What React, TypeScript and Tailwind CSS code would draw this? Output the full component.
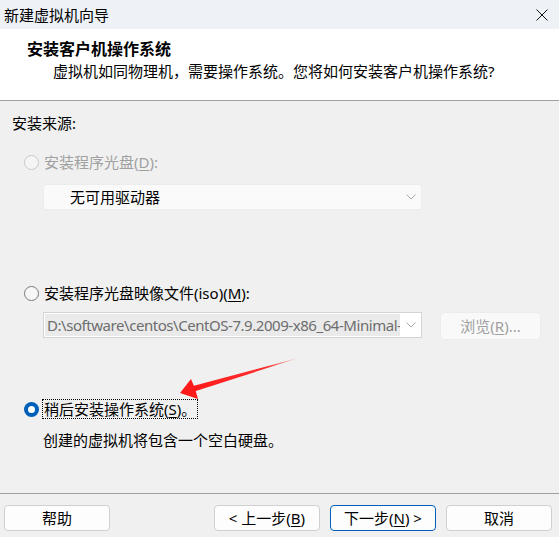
import React from 'react';

const font = '"Segoe UI", "Noto Sans", "Noto Sans CJK SC", sans-serif';

function Radio({ checked, disabled }: { checked?: boolean; disabled?: boolean }) {
  if (checked) {
    return (
      <span className="w-[15px] h-[15px] rounded-full bg-[#005fb8] flex items-center justify-center shrink-0">
        <span className="w-[7px] h-[7px] rounded-full bg-white" />
      </span>
    );
  }
  return (
    <span
      className={`w-[15px] h-[15px] rounded-full border shrink-0 ${
        disabled ? 'border-[#c8c8c8] bg-[#f5f5f5]' : 'border-[#7a7a7a] bg-[#f7f7f7]'
      }`}
    />
  );
}

function Chevron() {
  return (
    <svg width="10" height="6" viewBox="0 0 10 6" className="shrink-0">
      <path d="M0.5 0.5 L5 5 L9.5 0.5" fill="none" stroke="#a8a8a8" strokeWidth="1" />
    </svg>
  );
}

function Button({ label, primary }: { label: React.ReactNode; primary?: boolean }) {
  return (
    <button
      className={`w-[106px] h-[26px] rounded-[4px] bg-[#fdfdfd] text-[15px] text-black flex items-center justify-center border ${
        primary ? 'border-[#005fb8]' : 'border-[#d0d0d0]'
      }`}
    >
      {label}
    </button>
  );
}

export default function App() {
  return (
    <div className="w-[559px] h-[537px] flex flex-col bg-[#f0f0f0] relative overflow-hidden" style={{ fontFamily: font }}>
      {/* Title bar */}
      <div className="h-[29px] bg-[#eef2f7] flex items-center justify-between pl-[4px] pr-[11px] shrink-0">
        <span className="text-[15px] text-black leading-[20px]">新建虚拟机向导</span>
        <svg width="12" height="12" viewBox="0 0 12 12">
          <path d="M0.5 0.5 L11.5 11.5 M11.5 0.5 L0.5 11.5" stroke="#111" strokeWidth="1" />
        </svg>
      </div>

      {/* Header */}
      <div className="h-[72px] bg-white border-b border-[#a0a0a0] shrink-0 pl-[27px] pt-[9px]">
        <div className="text-[16px] font-bold text-black leading-[22px]">安装客户机操作系统</div>
        <div className="text-[15px] text-black leading-[20px] pl-[26px] mt-[1px]">
          虚拟机如同物理机，需要操作系统。您将如何安装客户机操作系统?
        </div>
      </div>

      {/* Body */}
      <div className="flex-1 flex flex-col pt-[12px]">
        <div className="pl-[12px] text-[15px] leading-[20px] text-black">安装来源:</div>

        <div className="flex items-center gap-[5px] pl-[24px] mt-[19px] h-[20px]">
          <Radio disabled />
          <span className="text-[15px] leading-[20px] text-[#a0a0a0]">
            安装程序光盘(<span className="underline underline-offset-2">D</span>):
          </span>
        </div>

        <div className="ml-[43px] mt-[12px] w-[379px] h-[26px] bg-[#fafafa] border border-[#ececec] rounded-[3px] flex items-center justify-between pl-[26px] pr-[5px]">
          <span className="text-[15px] leading-[20px] text-black">无可用驱动器</span>
          <Chevron />
        </div>

        <div className="flex items-center gap-[5px] pl-[24px] mt-[73px] h-[20px]">
          <Radio />
          <span className="text-[15px] leading-[20px] text-black">
            安装程序光盘映像文件(iso)(<span className="underline underline-offset-2">M</span>):
          </span>
        </div>

        <div className="flex items-start mt-[9px] ml-[43px] gap-[18px]">
          <div className="w-[379px] h-[26px] bg-white border border-[#d4d4d4] flex items-center justify-between pl-[1px] pr-[5px]">
            <div className="w-[355px] h-[22px] bg-[#eaeaea] overflow-hidden whitespace-nowrap text-[15px] leading-[22px] text-[#6d6d6d] pl-[2px] tracking-[-0.45px]">
              D:\software\centos\CentOS-7.9.2009-x86_64-Minimal-
            </div>
            <Chevron />
          </div>
          <div className="w-[101px] h-[28px] bg-[#f9f9f9] border border-[#ececec] rounded-[4px] flex items-center justify-center text-[15px] text-[#a0a0a0]">
            浏览(<span className="underline underline-offset-2">R</span>)...
          </div>
        </div>

        <div className="flex items-center gap-[3px] pl-[24px] mt-[59px] h-[20px]">
          <Radio checked />
          <span className="text-[15px] leading-[18px] text-black border border-dotted border-black px-[1px]">
            稍后安装操作系统(<span className="underline underline-offset-2">S</span>)。
          </span>
        </div>

        <div className="pl-[43px] mt-[11px] text-[15px] leading-[20px] text-black">
          创建的虚拟机将包含一个空白硬盘。
        </div>
      </div>

      {/* Footer */}
      <div className="h-[44px] border-t border-[#a0a0a0] shrink-0 flex items-start pt-[11px] pl-[4px] pr-[7px] gap-[10px]">
        <Button label="帮助" />
        <div className="flex-1" />
        <div className="flex gap-[10px] -ml-[10px]">
          <Button label={<>&lt; 上一步(<span className="underline underline-offset-2">B</span>)</>} />
          <Button primary label={<>下一步(<span className="underline underline-offset-2">N</span>) &gt;</>} />
          <Button label="取消" />
        </div>
      </div>

      {/* Annotation arrow */}
      <svg className="absolute left-0 top-0 pointer-events-none" width="559" height="537">
        <defs>
          <linearGradient id="tail" x1="300" y1="358" x2="190" y2="389" gradientUnits="userSpaceOnUse">
            <stop offset="0" stopColor="#ff3030" stopOpacity="0.15" />
            <stop offset="0.3" stopColor="#ff1a1a" stopOpacity="0.9" />
            <stop offset="1" stopColor="#ff1a1a" />
          </linearGradient>
        </defs>
        <polygon points="300,357.5 193.5,391.8 192,386.2" fill="url(#tail)" />
        <polygon points="180,393 191,379 195,388.5 198,399" fill="#ff1a1a" />
      </svg>
    </div>
  );
}
